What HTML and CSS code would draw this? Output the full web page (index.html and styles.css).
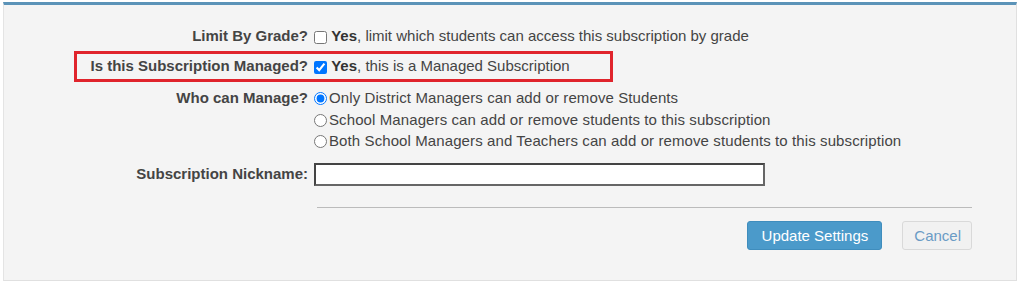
FILE: index.html
```html
<!DOCTYPE html>
<html lang="en">
<head>
  <meta charset="UTF-8">
  <title>Subscription Settings</title>
  <link rel="stylesheet" href="styles.css">
</head>
<body>
  <div class="panel">
    <div class="row">
      <label class="field-label">Limit By Grade?</label>
      <div class="field">
        <label><input type="checkbox" class="check"> <b>Yes</b>, limit which students can access this subscription by grade</label>
      </div>
    </div>

    <div class="row row-managed">
      <label class="field-label">Is this Subscription Managed?</label>
      <div class="field">
        <label><input type="checkbox" class="check" checked> <b>Yes</b>, this is a Managed Subscription</label>
      </div>
      <div class="highlight"></div>
    </div>

    <div class="row row-radios">
      <label class="field-label">Who can Manage?</label>
      <div class="field radios">
        <label><input type="radio" name="manage" class="radio" checked>Only District Managers can add or remove Students</label>
        <label><input type="radio" name="manage" class="radio">School Managers can add or remove students to this subscription</label>
        <label><input type="radio" name="manage" class="radio">Both School Managers and Teachers can add or remove students to this subscription</label>
      </div>
    </div>

    <div class="row row-nickname">
      <label class="field-label">Subscription Nickname:</label>
      <div class="field">
        <input type="text" class="nickname">
      </div>
    </div>

    <div class="actions">
      <button class="btn btn-primary">Update Settings</button>
      <button class="btn btn-cancel">Cancel</button>
    </div>
  </div>
</body>
</html>
```

FILE: styles.css
```css
body {
  margin: 0;
  background: #fff;
  font-family: "Liberation Sans", Arial, sans-serif;
  font-size: 15px;
  color: #444;
}
.panel {
  margin: 2px 3px 0 3px;
  height: 279px;
  box-sizing: border-box;
  background: #f4f4f4;
  border-top: 3px solid #5b93b8;
  border-left: 1px solid #e4e4e4;
  border-right: 1px solid #e0e0e0;
  border-bottom: 1px solid #e0e0e0;
  padding-top: 20px;
}
.row {
  display: flex;
  align-items: flex-start;
  line-height: 22px;
  position: relative;
}
.field-label {
  width: 304px;
  text-align: right;
  font-weight: bold;
  color: #444;
  flex-shrink: 0;
}
.field {
  margin-left: 6px;
}
.field b {
  color: #333;
}
.check {
  width: 13px;
  height: 13px;
  margin: 0 0 0 0;
  vertical-align: -3px;
}
.row-managed {
  margin-top: 8px;
}
.highlight {
  position: absolute;
  left: 70px;
  top: -4px;
  width: 539px;
  height: 31px;
  box-sizing: border-box;
  border: 3px solid #e0242c;
}
.row-radios {
  margin-top: 10px;
  line-height: 21.5px;
}
.radios label {
  display: block;
  letter-spacing: 0.1px;
}
.radio {
  width: 13px;
  height: 13px;
  margin: 0 2px 0 0;
  vertical-align: -2px;
}
.row-nickname {
  margin-top: 11px;
  align-items: center;
}
.nickname {
  width: 451px;
  height: 23px;
  box-sizing: border-box;
  margin-left: 0;
  border: 2px solid #444;
  border-right-color: #666;
  border-bottom-color: #666;
  background: #fff;
  padding: 0 4px;
}
.actions {
  margin: 21px 44px 0 313px;
  border-top: 1px solid #bbb;
  padding-top: 13px;
  display: flex;
  justify-content: flex-end;
  gap: 20px;
}
.btn {
  font-family: "Liberation Sans", Arial, sans-serif;
  font-size: 15px;
  height: 29px;
  border-radius: 3px;
  cursor: pointer;
}
.btn-primary {
  background: #4b9aca;
  border: 1px solid #3f8dbd;
  color: #fff;
  padding: 0 13px 0 14px;
}
.btn-cancel {
  background: #f1f1f1;
  border: 1px solid #d9d9d9;
  color: #6a9bc5;
  padding: 0 10px 0 11px;
}
```
